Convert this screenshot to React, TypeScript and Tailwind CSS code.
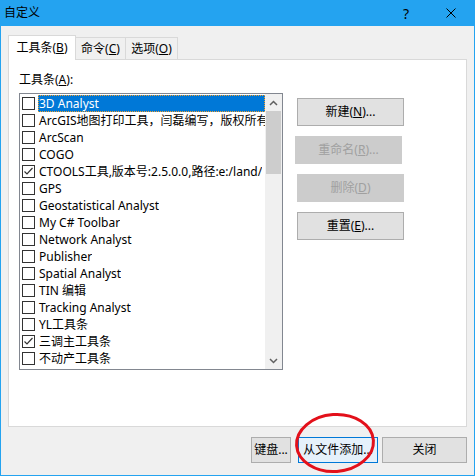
import React from "react";

const FONT = '"Segoe UI", "Noto Sans", "Noto Sans CJK SC", sans-serif';

const items: { label: string; checked?: boolean; selected?: boolean }[] = [
  { label: "3D Analyst", selected: true },
  { label: "ArcGIS地图打印工具，闫磊编写，版权所有" },
  { label: "ArcScan" },
  { label: "COGO" },
  { label: "CTOOLS工具,版本号:2.5.0.0,路径:e:/land/", checked: true },
  { label: "GPS" },
  { label: "Geostatistical Analyst" },
  { label: "My C# Toolbar" },
  { label: "Network Analyst" },
  { label: "Publisher" },
  { label: "Spatial Analyst" },
  { label: "TIN 编辑" },
  { label: "Tracking Analyst" },
  { label: "YL工具条" },
  { label: "三调主工具条", checked: true },
  { label: "不动产工具条" },
];

function Check({ checked }: { checked?: boolean }) {
  return (
    <div className="w-[13px] h-[13px] border border-[#333333] bg-white flex items-center justify-center shrink-0">
      {checked && (
        <svg width="11" height="11" viewBox="0 0 11 11">
          <path d="M1.5 5.5 L4 8 L9.5 2" fill="none" stroke="#333" strokeWidth="1.2" />
        </svg>
      )}
    </div>
  );
}

function Btn({
  children,
  disabled,
  focus,
  className = "",
}: {
  children: React.ReactNode;
  disabled?: boolean;
  focus?: boolean;
  className?: string;
}) {
  const base = disabled
    ? "bg-[#cccccc] border-[#cccccc] text-[#a0a0a0]"
    : focus
    ? "bg-[#e5f1fb] border-[#0078d7] text-black"
    : "bg-[#e1e1e1] border-[#adadad] text-black";
  return (
    <div
      className={`border flex items-center justify-center text-[12px] ${base} ${className}`}
    >
      {children}
    </div>
  );
}

export default function App() {
  return (
    <div
      className="w-[475px] h-[476px] bg-[#f0f0f0] border-x border-b border-[#24a3f0] flex flex-col relative overflow-hidden"
      style={{ fontFamily: FONT }}
    >
      {/* title bar */}
      <div className="h-[26px] bg-[#24a3f0] flex items-center shrink-0 text-[12px] text-black">
        <span className="pl-[3px]">自定义</span>
        <span className="ml-auto mr-[37px] text-[14px]">?</span>
        <svg width="10" height="10" viewBox="0 0 10 10" className="mr-[18px]">
          <path d="M0.5 0.5 L9.5 9.5 M9.5 0.5 L0.5 9.5" stroke="#000" strokeWidth="1" />
        </svg>
      </div>

      <div className="px-[7px] pt-[9px] flex flex-col">
        {/* tabs */}
        <div className="flex items-end h-[24px] text-[12px] relative z-10">
          <div className="h-[25px] w-[68px] bg-white border border-b-0 border-[#d9d9d9] flex items-center justify-center -mb-px pb-[1px]">
            工具条(<span className="underline">B</span>)
          </div>
          <div className="h-[22px] w-[50px] bg-[#f0f0f0] border border-l-0 border-b-0 border-[#d9d9d9] flex items-center justify-center">
            命令(<span className="underline">C</span>)
          </div>
          <div className="h-[22px] w-[52px] bg-[#f0f0f0] border border-l-0 border-b-0 border-[#d9d9d9] flex items-center justify-center">
            选项(<span className="underline">O</span>)
          </div>
        </div>

        {/* panel */}
        <div className="h-[368px] bg-white border border-[#d9d9d9] flex flex-col px-[10px] pt-[12px]">
          <div className="text-[12px] leading-[16px] text-black">
            工具条(<span className="underline">A</span>):
          </div>
          <div className="flex mt-[5px]">
            {/* listbox */}
            <div className="w-[264px] h-[277px] border border-[#828790] flex bg-white">
              <div className="flex-1 pt-[1px] pl-[2px] flex flex-col overflow-hidden">
                {items.map((it, i) => (
                  <div key={i} className="h-[17px] flex items-center shrink-0">
                    <Check checked={it.checked} />
                    <div
                      className={`ml-[3px] h-[17px] flex items-center pl-[1px] text-[12px] whitespace-nowrap overflow-hidden ${
                        it.selected
                          ? "flex-1 bg-[#0078d7] text-white outline outline-1 outline-dotted outline-[#f0a030] -outline-offset-1"
                          : "text-black"
                      }`}
                    >
                      {it.label}
                    </div>
                  </div>
                ))}
              </div>
              {/* scrollbar */}
              <div className="w-[17px] bg-[#f0f0f0] flex flex-col shrink-0">
                <div className="h-[17px] flex items-center justify-center">
                  <svg width="9" height="6" viewBox="0 0 9 6">
                    <path d="M1 5 L4.5 1.5 L8 5" fill="none" stroke="#606060" strokeWidth="1.5" />
                  </svg>
                </div>
                <div className="h-[63px] mx-[1px] bg-[#cdcdcd]" />
                <div className="flex-1" />
                <div className="h-[17px] flex items-center justify-center">
                  <svg width="9" height="6" viewBox="0 0 9 6">
                    <path d="M1 1 L4.5 4.5 L8 1" fill="none" stroke="#606060" strokeWidth="1.5" />
                  </svg>
                </div>
              </div>
            </div>

            {/* right buttons */}
            <div className="flex flex-col ml-[14px] mt-[5px]">
              <Btn className="w-[107px] h-[28px]">
                新建(<span className="underline">N</span>)...
              </Btn>
              <Btn disabled className="w-[107px] h-[28px] mt-[10px] -ml-[2px]">
                重命名(<span className="underline">R</span>)...
              </Btn>
              <Btn disabled className="w-[107px] h-[28px] mt-[10px]">
                删除(<span className="underline">D</span>)
              </Btn>
              <Btn className="w-[107px] h-[28px] mt-[10px]">
                重置(<span className="underline">E</span>)...
              </Btn>
            </div>
          </div>
        </div>

        {/* bottom buttons */}
        <div className="flex justify-end mt-[10px]">
          <Btn className="w-[40px] h-[26px]">键盘...</Btn>
          <Btn focus className="w-[80px] h-[26px] ml-[7px]">从文件添加...</Btn>
          <Btn className="w-[85px] h-[26px] ml-[4px]">关闭</Btn>
        </div>
      </div>

      {/* red annotation ellipse */}
      <svg
        className="absolute left-0 top-0 pointer-events-none"
        width="475"
        height="476"
        viewBox="0 0 475 476"
      >
        <ellipse
          cx="334"
          cy="443"
          rx="38.5"
          ry="28.5"
          fill="none"
          stroke="#e3101a"
          strokeWidth="3"
          transform="rotate(-4 334 443)"
        />
      </svg>
    </div>
  );
}
